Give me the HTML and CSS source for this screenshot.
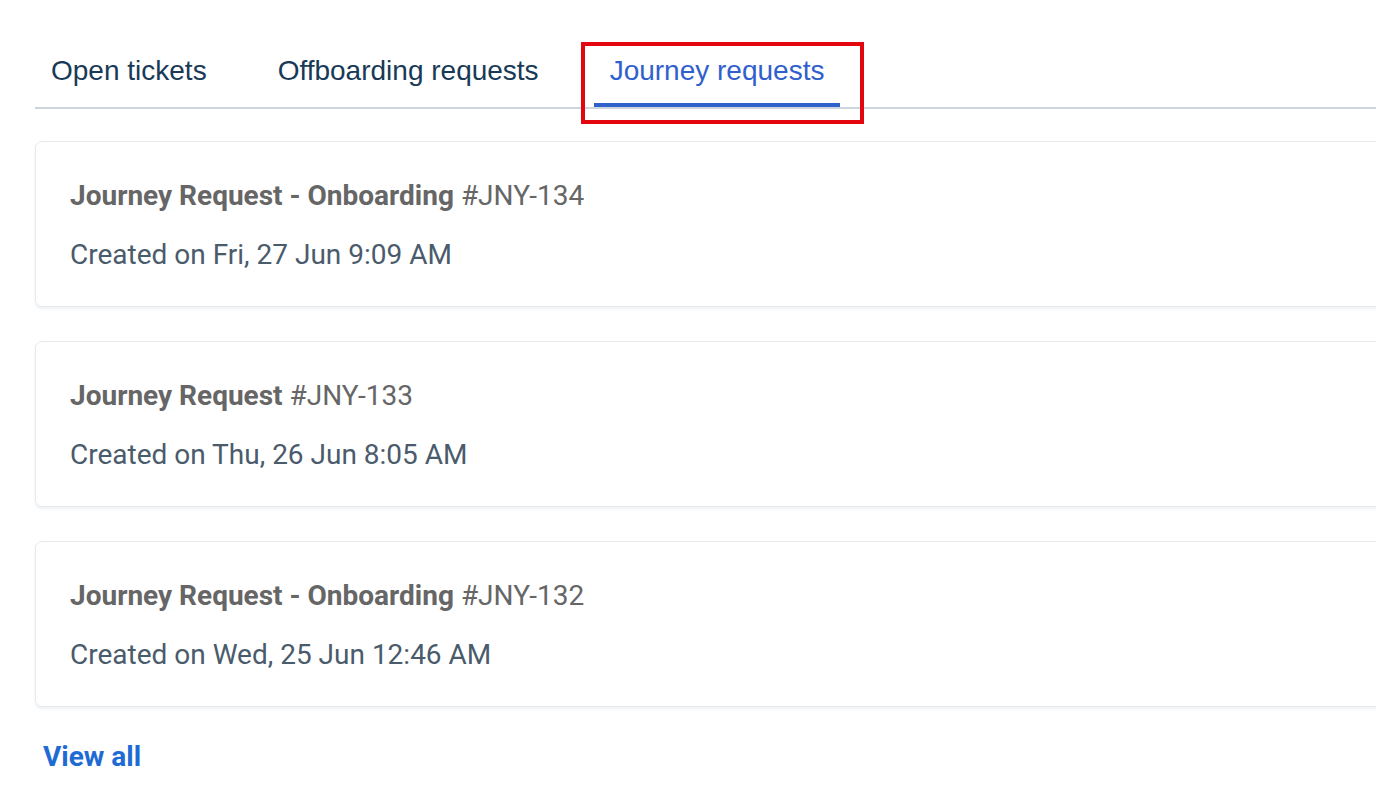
FILE: index.html
```html
<!DOCTYPE html>
<html lang="en">
<head>
<meta charset="utf-8">
<title>Journey requests</title>
<link rel="stylesheet" href="styles.css">
</head>
<body>
<main class="panel">
  <nav class="tabs">
    <a class="tab">Open tickets</a>
    <a class="tab">Offboarding requests</a>
    <a class="tab tab-active">Journey requests<span class="highlight"></span></a>
  </nav>
  <section class="list">
    <article class="card">
      <div class="card-title"><strong>Journey Request - Onboarding</strong> #JNY-134</div>
      <div class="card-date">Created on Fri, 27 Jun 9:09 AM</div>
    </article>
    <article class="card">
      <div class="card-title"><strong>Journey Request</strong> #JNY-133</div>
      <div class="card-date">Created on Thu, 26 Jun 8:05 AM</div>
    </article>
    <article class="card">
      <div class="card-title"><strong>Journey Request - Onboarding</strong> #JNY-132</div>
      <div class="card-date">Created on Wed, 25 Jun 12:46 AM</div>
    </article>
  </section>
  <a class="view-all">View all</a>
</main>
</body>
</html>
```

FILE: styles.css
```css
html, body {
  margin: 0;
  padding: 0;
  background: #ffffff;
  overflow: hidden;
}

.panel {
  width: 1420px;
  padding: 55px 0 0 35px;
  box-sizing: border-box;
  font-family: Roboto, "Liberation Sans", sans-serif;
}

.tabs {
  display: flex;
  gap: 39px;
  border-bottom: 2px solid #cdd6df;
}

.tab {
  position: relative;
  display: block;
  padding: 0 16px 16px;
  border-bottom: 4px solid transparent;
  font-family: "Liberation Sans", Arial, sans-serif;
  font-size: 28px;
  line-height: 32px;
  color: #183a56;
  cursor: pointer;
}

.tab-active {
  color: #3060cc;
  border-bottom-color: #3060cc;
}

.highlight {
  position: absolute;
  left: -13px;
  right: -24px;
  top: -13px;
  bottom: -21px;
  border: 4px solid #e4060f;
  pointer-events: none;
}

.list {
  display: flex;
  flex-direction: column;
  gap: 34px;
  margin-top: 32px;
}

.card {
  border: 1px solid #e6eaef;
  border-radius: 7px;
  box-shadow: 0 2px 3px rgba(30, 50, 80, 0.07);
  padding: 38px 34px 35px;
  background: #fff;
}

.card-title {
  font-size: 28px;
  line-height: 32px;
  color: #666666;
}

.card-title strong {
  font-weight: 700;
}

.card-date {
  margin-top: 27px;
  font-size: 28px;
  line-height: 32px;
  color: #4a5b6c;
}

.view-all {
  display: inline-block;
  margin: 34px 0 0 8px;
  font-size: 28px;
  line-height: 32px;
  font-weight: 700;
  color: #1f6bd4;
  cursor: pointer;
}
```
